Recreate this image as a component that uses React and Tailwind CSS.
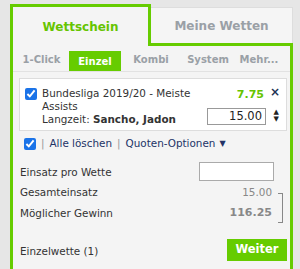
import React from "react";

export default function App() {
  const font = { fontFamily: '"DejaVu Sans", Verdana, sans-serif' };
  return (
    <div className="w-[300px] h-[269px] bg-[#e6e6e6] overflow-hidden pl-[10px] pt-[4px] pr-[7px]" style={font}>
      <div className="flex h-[42px]">
        <div className="w-[141px] border-[3px] border-b-0 border-[#66cc00] bg-[#f4f4f4] flex items-center justify-center text-[12px] font-bold text-[#66c400]">
          Wettschein
        </div>
        <div className="flex-1 flex flex-col mt-[3px]">
          <div className="flex-1 bg-[#f5f5f5] border border-b-0 border-l-0 border-[#dddddd] flex items-center justify-center text-[12px] font-bold text-[#9aa0a6]">
            Meine Wetten
          </div>
          <div className="h-[3px] bg-[#66cc00]"></div>
        </div>
      </div>
      <div className="h-[240px] border-x-[3px] border-[#66cc00] bg-[#f4f4f4]">
        <div className="flex items-end h-[26px] border-b border-[#e2e2e2] text-[10px] font-bold text-[#9aa0a6] pl-[1px]">
          <div className="w-[55px] text-center pb-[4px]">1-Click</div>
          <div className="w-[52px] h-[20px] bg-[#66cc00] text-white flex items-center justify-center">Einzel</div>
          <div className="w-[60px] text-center pb-[4px]">Kombi</div>
          <div className="w-[54px] text-center pb-[4px]">System</div>
          <div className="w-[48px] text-center pb-[4px]">Mehr...</div>
        </div>
        <div className="pl-[6px] pr-[3px] pt-[6px]">
          <div className="relative bg-white border border-[#dddddd] h-[53px] pl-[5px] pt-[8px] flex text-[10.4px] text-[#333]">
            <input type="checkbox" defaultChecked className="w-[12px] h-[12px] mt-[1px] accent-[#1a73e8]" />
            <div className="ml-[5px] leading-[13px]">
              <div>Bundesliga 2019/20 - Meiste</div>
              <div>Assists</div>
              <div>Langzeit: <span className="font-bold">Sancho, Jadon</span></div>
            </div>
            <div className="absolute right-[22px] top-[8px] text-[11px] font-bold text-[#66c400]">7.75</div>
            <div className="absolute right-[6px] top-[4px] text-[12px] font-bold text-[#223355]">×</div>
            <div className="absolute right-[20px] top-[29px] w-[59px] h-[17px] border border-[#999] bg-white text-right pr-[3px] text-[11.5px] leading-[15px] text-[#222]">15.00</div>
            <div className="absolute right-[7px] top-[30px] flex flex-col items-center text-[7px] leading-[7px] text-[#222]">
              <span>▲</span>
              <span>▼</span>
            </div>
          </div>
          <div className="flex items-center h-[24px] mt-[1px] text-[10.4px] text-[#223366]">
            <input type="checkbox" defaultChecked className="w-[12px] h-[12px] ml-[5px] accent-[#1a73e8]" />
            <span className="mx-[5px] text-[#999]">|</span>
            <span>Alle löschen</span>
            <span className="mx-[5px] text-[#999]">|</span>
            <span>Quoten-Optionen</span>
            <span className="ml-[4px] text-[8px]">▼</span>
          </div>
          <div className="mt-[6px] text-[10.4px] text-[#333] pl-[1px]">
            <div className="flex items-center justify-between h-[19px]">
              <span className="pt-[2px]">Einsatz pro Wette</span>
              <div className="w-[75px] h-[19px] border border-[#aaa] bg-white mr-[13px]"></div>
            </div>
            <div className="flex">
              <div className="flex-1">
                <div className="h-[20px] flex items-center mt-[2px]">Gesamteinsatz</div>
                <div className="h-[21px] flex items-center">Möglicher Gewinn</div>
              </div>
              <div className="text-right mr-[6px] text-[#888]">
                <div className="h-[20px] flex items-center justify-end mt-[2px]">15.00</div>
                <div className="h-[21px] flex items-center justify-end font-bold text-[11px] text-[#888]">116.25</div>
              </div>
              <div className="w-[5px] h-[30px] mt-[12px] border border-l-0 border-[#888] mr-[4px]"></div>
            </div>
            <div className="flex items-center justify-between mt-[15px]">
              <span className="pt-[4px]">Einzelwette (1)</span>
              <div className="w-[60px] h-[22px] bg-[#66cc00] text-white font-bold text-[11.5px] flex items-center justify-center">Weiter</div>
            </div>
          </div>
        </div>
      </div>
    </div>
  );
}
